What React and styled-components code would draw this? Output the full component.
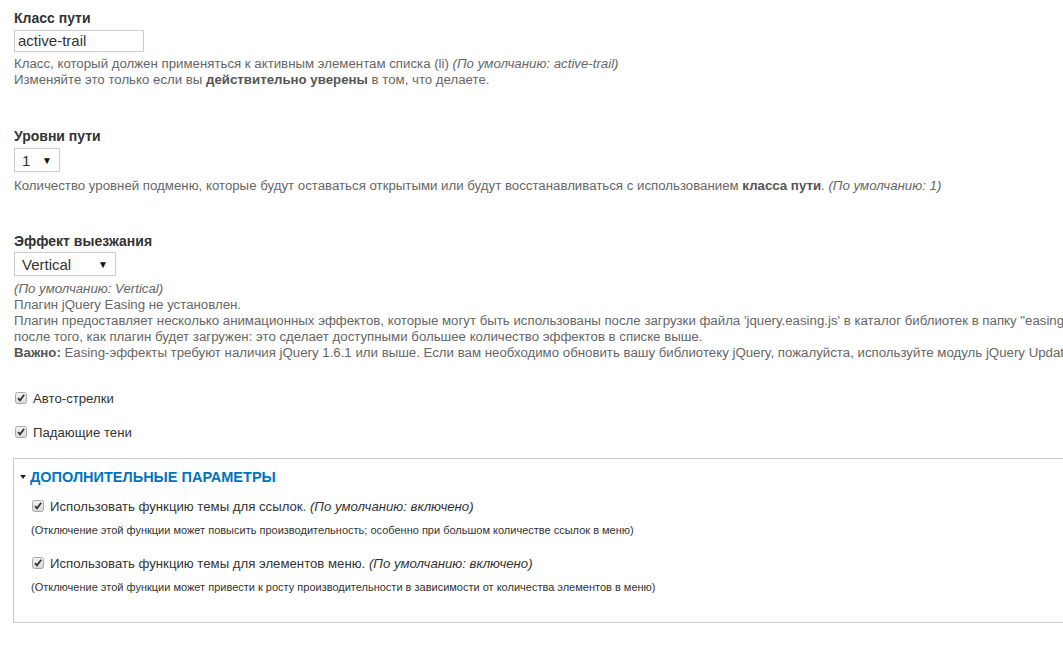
import styled, { createGlobalStyle } from 'styled-components';

const GlobalStyle = createGlobalStyle`
  html, body {
    margin: 0;
    padding: 0;
    background: #fff;
    overflow: hidden;
  }
  body {
    font-family: "Liberation Sans", Arial, sans-serif;
    color: #333;
  }
`;

const Page = styled.div`
  padding: 10px 0 0 14px;
  width: 1400px;
`;

const FormItem = styled.div`
  margin-bottom: ${props => props.gap || 0}px;
`;

const Label = styled.label`
  display: block;
  font-size: 14px;
  font-weight: bold;
  line-height: 16px;
  color: #333;
  margin-bottom: ${props => props.space || 4}px;
`;

const TextInput = styled.div`
  box-sizing: border-box;
  width: 130px;
  height: 22px;
  border: 1px solid #ccc;
  padding: 0 3px;
  font-size: 15px;
  line-height: 20px;
  color: #333;
`;

const Select = styled.div`
  box-sizing: border-box;
  display: flex;
  align-items: center;
  justify-content: space-between;
  width: ${props => props.w}px;
  height: 24px;
  border: 1px solid #ccc;
  padding: 0 7px 0 7px;
  font-size: 15px;
  color: #333;

  span {
    font-size: 10px;
    color: #111;
  }
`;

const Description = styled.div`
  margin-top: ${props => props.top || 4}px;
  font-size: 13.25px;
  line-height: 16px;
  color: #666;
  white-space: nowrap;

  em {
    font-style: italic;
  }
  b {
    color: #555;
  }
`;

const CheckRow = styled.div`
  display: flex;
  align-items: center;
  gap: 6px;
  height: 16px;
  font-size: 13.2px;
  color: #333;
  margin-bottom: ${props => props.gap || 0}px;

  em {
    font-style: italic;
  }
`;

const Box = styled.span`
  display: inline-flex;
  width: 12px;
  height: 12px;
  margin-left: 1px;
`;

const Fieldset = styled.div`
  margin-top: 18px;
  margin-left: -1px;
  border: 1px solid #ccc;
  border-right: none;
  padding: 9px 0 28px 17px;
`;

const Legend = styled.div`
  display: flex;
  align-items: center;
  gap: 4px;
  height: 18px;
  margin-left: -11px;
  margin-bottom: 12px;
  font-size: 14.5px;
  font-weight: bold;
  text-transform: uppercase;
  color: #0074bd;
`;

const Caret = styled.span`
  width: 0;
  height: 0;
  border-left: 3px solid transparent;
  border-right: 3px solid transparent;
  border-top: 4px solid #222;
`;

const SmallNote = styled.div`
  font-size: 11px;
  line-height: 14px;
  color: #333;
  margin: 9px 0 ${props => props.gap || 0}px 0;
`;

const Checkbox = () => (
  <Box>
    <svg width="12" height="12" viewBox="0 0 12 12">
      <defs>
        <linearGradient id="cbg" x1="0" y1="0" x2="0" y2="1">
          <stop offset="0" stopColor="#f4f4f4" />
          <stop offset="1" stopColor="#d8d8d8" />
        </linearGradient>
      </defs>
      <rect x="0.5" y="0.5" width="11" height="11" rx="2" fill="url(#cbg)" stroke="#a8a8a8" />
      <path d="M3 6.2 L5 8.4 L9.2 2.8" fill="none" stroke="#333" strokeWidth="1.8" />
    </svg>
  </Box>
);

const App = () => (
  <Page>
    <GlobalStyle />
    <FormItem gap={40}>
      <Label>Класс пути</Label>
      <TextInput>active-trail</TextInput>
      <Description>
        Класс, который должен применяться к активным элементам списка (li) <em>(По умолчанию: active-trail)</em>
        <br />
        Изменяйте это только если вы <b>действительно уверены</b> в том, что делаете.
      </Description>
    </FormItem>

    <FormItem gap={39}>
      <Label>Уровни пути</Label>
      <Select w={46}>1<span>▼</span></Select>
      <Description top={6}>
        Количество уровней подменю, которые будут оставаться открытыми или будут восстанавливаться с использованием <b>класса пути</b>. <em>(По умолчанию: 1)</em>
      </Description>
    </FormItem>

    <FormItem gap={29}>
      <Label space={3}>Эффект выезжания</Label>
      <Select w={102}>Vertical<span>▼</span></Select>
      <Description top={5}>
        <em>(По умолчанию: Vertical)</em>
        <br />
        Плагин jQuery Easing не установлен.
        <br />
        Плагин предоставляет несколько анимационных эффектов, которые могут быть использованы после загрузки файла 'jquery.easing.js' в каталог библиотек в папку "easing"
        <br />
        после того, как плагин будет загружен: это сделает доступными большее количество эффектов в списке выше.
        <br />
        <b>Важно:</b> Easing-эффекты требуют наличия jQuery 1.6.1 или выше. Если вам необходимо обновить вашу библиотеку jQuery, пожалуйста, используйте модуль jQuery Update.
      </Description>
    </FormItem>

    <CheckRow gap={18}>
      <Checkbox />
      <span>Авто-стрелки</span>
    </CheckRow>
    <CheckRow>
      <Checkbox />
      <span>Падающие тени</span>
    </CheckRow>

    <Fieldset>
      <Legend>
        <Caret />
        Дополнительные параметры
      </Legend>
      <CheckRow>
        <Checkbox />
        <span>
          Использовать функцию темы для ссылок. <em>(По умолчанию: включено)</em>
        </span>
      </CheckRow>
      <SmallNote gap={18}>
        (Отключение этой функции может повысить производительность; особенно при большом количестве ссылок в меню)
      </SmallNote>
      <CheckRow>
        <Checkbox />
        <span>
          Использовать функцию темы для элементов меню. <em>(По умолчанию: включено)</em>
        </span>
      </CheckRow>
      <SmallNote>
        (Отключение этой функции может привести к росту производительности в зависимости от количества элементов в меню)
      </SmallNote>
    </Fieldset>
  </Page>
);

export default App;
